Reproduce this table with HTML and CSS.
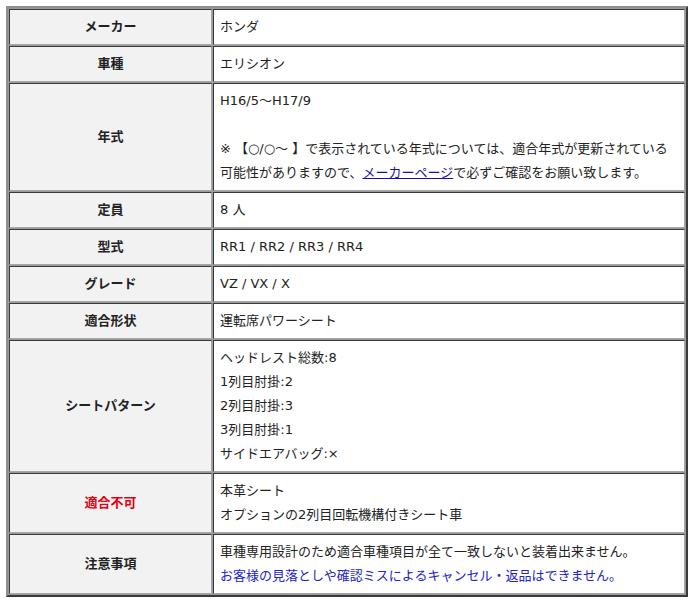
FILE: index.html
```html
<!DOCTYPE html>
<html lang="ja">
<head>
<meta charset="utf-8">
<title>適合表</title>
<link rel="stylesheet" href="styles.css">
</head>
<body>
<table class="spec">
  <colgroup><col class="c-head"><col class="c-body"></colgroup>
  <tr><th>メーカー</th><td>ホンダ</td></tr>
  <tr><th>車種</th><td>エリシオン</td></tr>
  <tr><th>年式</th><td>H16/5～H17/9<br><br>※ 【○/○～ 】で表示されている年式については、適合年式が更新されている可能性がありますので、<a href="#">メーカーページ</a>で必ずご確認をお願い致します。</td></tr>
  <tr><th>定員</th><td>8 人</td></tr>
  <tr><th>型式</th><td>RR1 / RR2 / RR3 / RR4</td></tr>
  <tr><th>グレード</th><td>VZ / VX / X</td></tr>
  <tr><th>適合形状</th><td>運転席パワーシート</td></tr>
  <tr><th>シートパターン</th><td>ヘッドレスト総数:8<br>1列目肘掛:2<br>2列目肘掛:3<br>3列目肘掛:1<br>サイドエアバッグ:×</td></tr>
  <tr><th class="ng">適合不可</th><td>本革シート<br>オプションの2列目回転機構付きシート車</td></tr>
  <tr><th>注意事項</th><td>車種専用設計のため適合車種項目が全て一致しないと装着出来ません。<br><span class="notice">お客様の見落としや確認ミスによるキャンセル・返品はできません。</span></td></tr>
</table>
</body>
</html>
```

FILE: styles.css
```css
html, body {
  background: #ffffff;
}
body {
  margin: 6px;
  font-family: "DejaVu Sans", Verdana, "Noto Sans CJK JP", sans-serif;
  font-size: 13px;
  color: #222222;
}
.spec {
  width: 682px;
  table-layout: fixed;
  border-collapse: separate;
  border-spacing: 1px;
  border-style: solid;
  border-width: 2px;
  border-color: #8e8e8e #3a3a3a #3a3a3a #8e8e8e;
  background: #9a9a9a;
}
.c-head {
  width: 203px;
}
.spec th,
.spec td {
  border-style: solid;
  border-width: 1px;
  border-color: #3a3a3a #a6a6a6 #a6a6a6 #3a3a3a;
  padding: 5px 6px 5px 6px;
  line-height: 24px;
  vertical-align: middle;
}
.spec th {
  background: #f2f2f2;
  font-weight: bold;
  text-align: center;
  color: #222222;
}
.spec td {
  background: #ffffff;
  text-align: left;
}
.spec th.ng {
  color: #e60012;
}
.spec a {
  color: #1a0dab;
  text-decoration: underline;
}
.notice {
  color: #2323c8;
}
```
